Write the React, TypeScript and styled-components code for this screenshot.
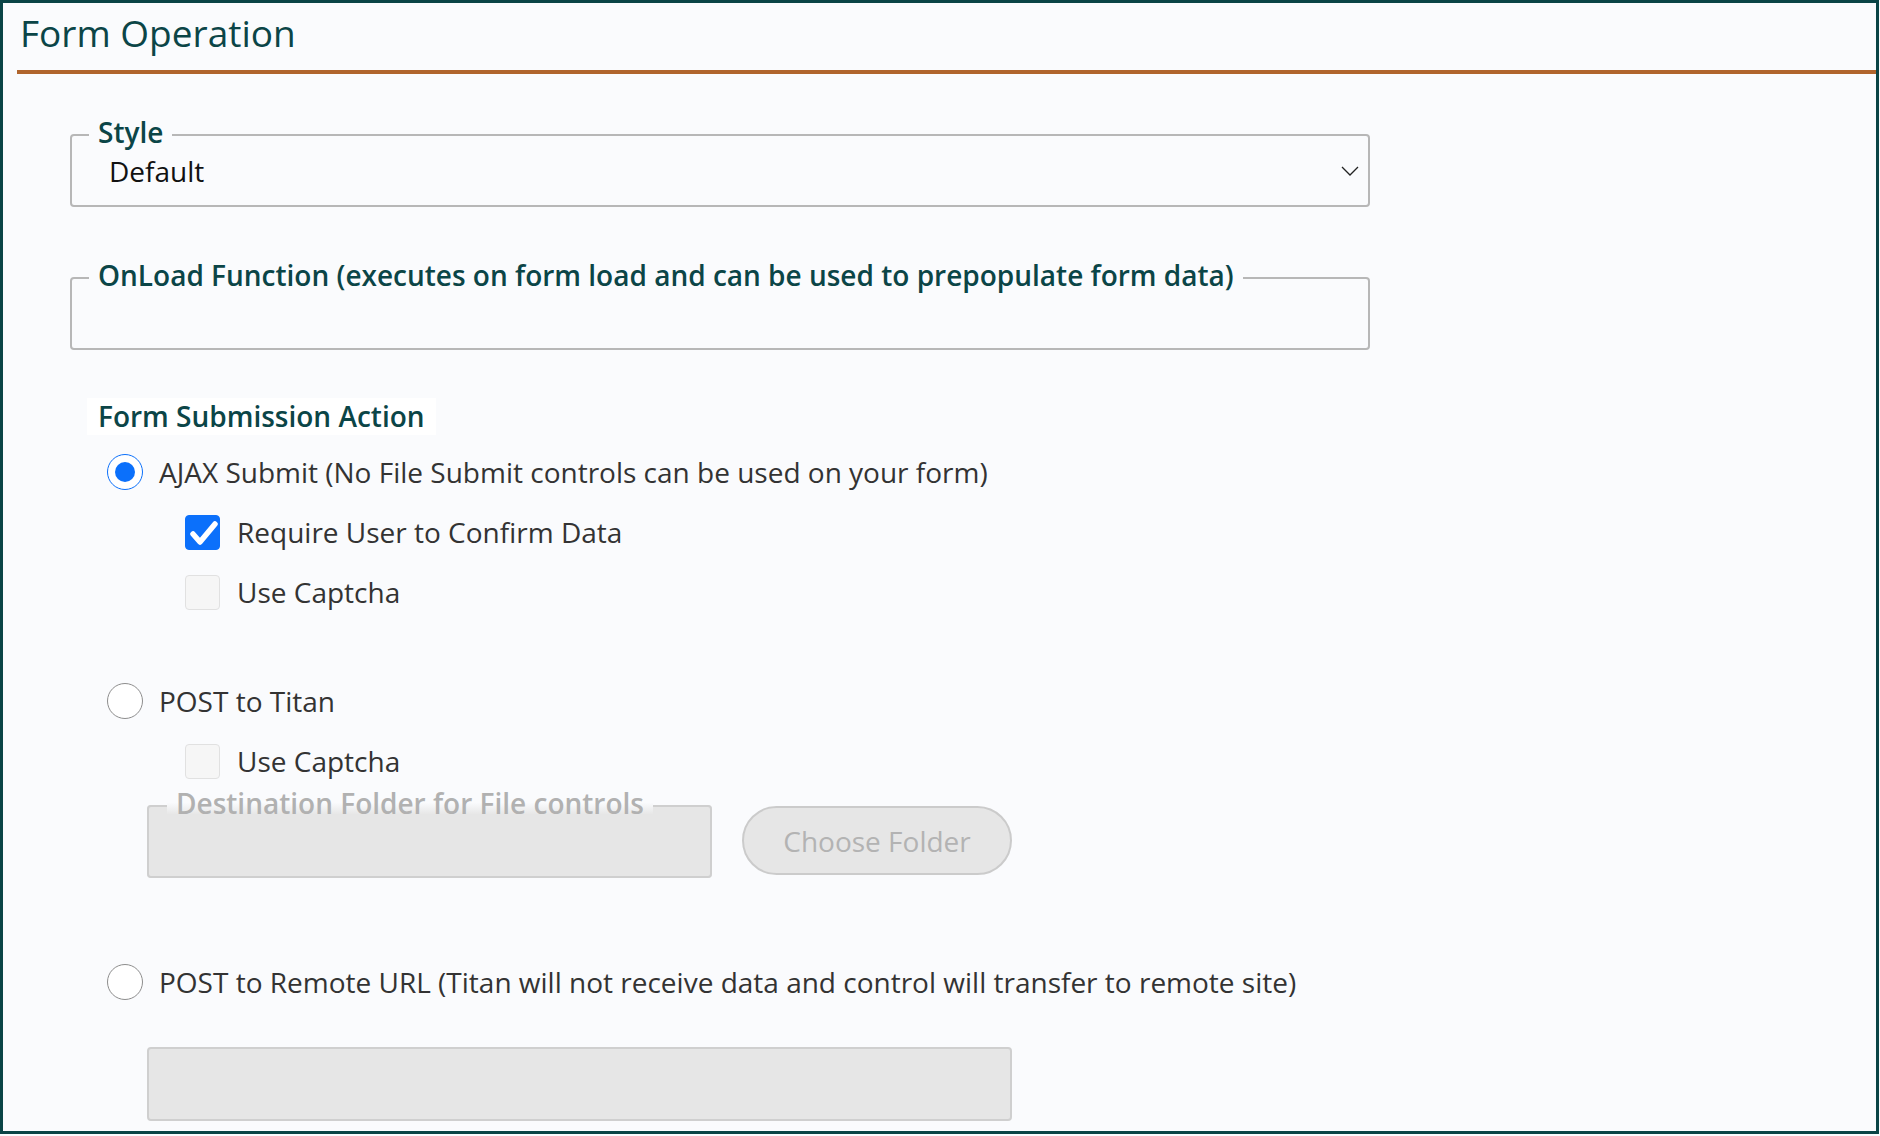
import React from 'react';
import styled, { createGlobalStyle } from 'styled-components';

const GlobalStyle = createGlobalStyle`
  html, body {
    margin: 0;
    padding: 0;
    background: #fafbfd;
  }
  body {
    font-family: 'Open Sans', 'Noto Sans', sans-serif;
  }
  * {
    box-sizing: border-box;
  }
`;

function Chevron(): JSX.Element {
  return (
    <svg width="18" height="10" viewBox="0 0 18 10">
      <polyline points="1,1 9,9 17,1" fill="none" stroke="#222" strokeWidth="1.3" />
    </svg>
  );
}

function CheckMark(): JSX.Element {
  return (
    <svg width="35" height="35" viewBox="0 0 35 35">
      <polyline
        points="7,18 14,26 29,8"
        fill="none"
        stroke="#fff"
        strokeWidth="5.5"
        strokeLinecap="round"
        strokeLinejoin="round"
      />
    </svg>
  );
}

function Option(
  {
    kind, checked, indent = 0, gap = 0, children,
  }:{
    kind:'radio' | 'check',
    checked?:boolean,
    indent?:number,
    gap?:number,
    children:React.ReactNode,
  },
):JSX.Element {
  return (
    <Row $indent={indent} $gap={gap}>
      {kind === 'radio'
        ? <Radio $checked={!!checked}>{checked && <Dot />}</Radio>
        : <Box $checked={!!checked}>{checked && <CheckMark />}</Box>}
      <span>{children}</span>
    </Row>
  );
}

export default function App():JSX.Element {
  return (
    <>
      <GlobalStyle />
      <Frame>
        <Header>
          <Title>Form Operation</Title>
        </Header>
        <Content>
          <Field $width={1300} $top={44}>
            <Legend>Style</Legend>
            <Inner>
              <span>Default</span>
              <Chevron />
            </Inner>
          </Field>

          <Field $width={1300} $top={54}>
            <Legend>OnLoad Function (executes on form load and can be used to prepopulate form data)</Legend>
            <Inner />
          </Field>

          <SectionLabel>Form Submission Action</SectionLabel>

          <Options>
            <Option kind="radio" checked>
              AJAX Submit (No File Submit controls can be used on your form)
            </Option>
            <Option kind="check" checked indent={78}>Require User to Confirm Data</Option>
            <Option kind="check" indent={78}>Use Captcha</Option>

            <Option kind="radio" gap={49}>POST to Titan</Option>
            <Option kind="check" indent={78}>Use Captcha</Option>

            <FolderGroup>
              <Field $width={565} $top={0} $disabled>
                <Legend $disabled>Destination Folder for File controls</Legend>
                <Inner />
              </Field>
              <FolderButton type="button" disabled>Choose Folder</FolderButton>
            </FolderGroup>

            <Option kind="radio" gap={74}>
              POST to Remote URL (Titan will not receive data and control will transfer to remote site)
            </Option>
            <RemoteInput disabled />
          </Options>
        </Content>
      </Frame>
    </>
  );
}

const Frame = styled.div`
  width: 1879px;
  height: 1134px;
  border: 3px solid #0a4446;
  background: #fafbfd;
  overflow: hidden;
`;

const Header = styled.div`
  margin-left: 14px;
  padding: 5px 0 13px 3px;
  border-bottom: 4px solid #b0652d;
`;

const Title = styled.h1`
  margin: 0;
  font-size: 37px;
  line-height: 49px;
  font-weight: 500;
  color: #0b4547;
`;

const Content = styled.div`
  padding-left: 67px;
`;

const Field = styled.fieldset<{ $width:number, $top:number, $disabled?:boolean }>`
  margin: ${(p) => p.$top}px 0 0 0;
  padding: 0;
  min-inline-size: 0;
  width: ${(p) => p.$width}px;
  border: 2px solid ${(p) => (p.$disabled ? '#cfcfcf' : '#b7b7b7')};
  border-radius: 4px;
  background: ${(p) => (p.$disabled ? '#e6e6e6' : 'transparent')};
`;

const Legend = styled.legend<{ $disabled?:boolean }>`
  margin-left: ${(p) => (p.$disabled ? 18 : 17)}px;
  padding: 0 9px 6px 9px;
  font-size: 28px;
  line-height: 28px;
  font-weight: 600;
  color: ${(p) => (p.$disabled ? '#b1b1b1' : '#0b4547')};
  background: ${(p) => (p.$disabled
    ? 'linear-gradient(to bottom, #fafbfd 40%, #e6e6e6 75%)'
    : 'transparent')};
`;

const Inner = styled.div`
  height: 53px;
  display: flex;
  align-items: center;
  justify-content: space-between;
  padding: 0 9px 16px 37px;
  font-size: 28px;
  color: #111;
`;

const SectionLabel = styled.div`
  width: fit-content;
  margin: 48px 0 0 17px;
  padding: 0 11px;
  background: #fff;
  font-size: 28px;
  line-height: 37px;
  font-weight: 600;
  color: #0b4547;
`;

const Options = styled.div`
  padding-left: 37px;
  margin-top: 7px;
`;

const Row = styled.div<{ $indent:number, $gap:number }>`
  display: flex;
  align-items: center;
  gap: 16px;
  height: 60px;
  margin-top: ${(p) => p.$gap}px;
  padding-left: ${(p) => p.$indent}px;
  font-size: 28px;
  color: #333;
`;

const Radio = styled.span<{ $checked:boolean }>`
  width: 36px;
  height: 36px;
  flex: none;
  border-radius: 50%;
  border: 1px solid ${(p) => (p.$checked ? '#0b70fb' : '#8d8d8d')};
  background: #fff;
  display: grid;
  place-items: center;
`;

const Dot = styled.span`
  width: 20px;
  height: 20px;
  border-radius: 50%;
  background: #0b70fb;
`;

const Box = styled.span<{ $checked:boolean }>`
  width: 35px;
  height: 35px;
  flex: none;
  margin-right: 1px;
  border-radius: 4px;
  border: 1px solid ${(p) => (p.$checked ? '#0b70fb' : '#e1e1e1')};
  background: ${(p) => (p.$checked ? '#0b70fb' : '#f6f6f6')};
  display: grid;
  place-items: center;
`;

const FolderGroup = styled.div`
  display: flex;
  align-items: flex-end;
  gap: 30px;
  margin: -2px 0 0 40px;
`;

const FolderButton = styled.button`
  width: 270px;
  height: 69px;
  margin-bottom: 3px;
  border-radius: 35px;
  border: 2px solid #cbcbcb;
  background: #e6e6e6;
  color: #b3b3b3;
  font-family: inherit;
  font-size: 28px;
`;

const RemoteInput = styled.input`
  display: block;
  width: 865px;
  height: 74px;
  margin: 35px 0 0 40px;
  border: 2px solid #cfcfcf;
  border-radius: 4px;
  background: #e6e6e6;
`;
